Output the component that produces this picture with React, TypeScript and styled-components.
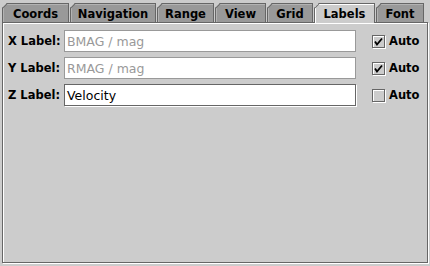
import React from 'react';
import styled, { createGlobalStyle } from 'styled-components';

const GlobalStyle = createGlobalStyle`
  html, body {
    margin: 0;
    padding: 0;
    background: #cccccc;
  }
  body {
    font-family: "DejaVu Sans", "Liberation Sans", sans-serif;
  }
`;

const Window = styled.div`
  width: 430px;
  height: 266px;
  background: #cccccc;
  box-sizing: border-box;
  padding: 3px 2px 3px 2px;
  display: flex;
  flex-direction: column;
`;

const TabStrip = styled.div`
  display: flex;
  height: 19px;
  position: relative;
  z-index: 1;
`;

const Tab = styled.div<{ $width: number; $selected?: boolean }>`
  position: relative;
  width: ${(p) => p.$width}px;
  height: ${(p) => (p.$selected ? 20 : 19)}px;
  box-sizing: border-box;
  margin-right: 1px;
  border: 1px solid #666666;
  border-bottom: none;
  clip-path: polygon(5px 0, 100% 0, 100% 100%, 0 100%, 0 5px);
  background: ${(p) => (p.$selected ? '#cccccc' : '#999999')};
  box-shadow: inset 1px 1px 0 ${(p) => (p.$selected ? '#ffffff' : '#b3b3b3')};
  display: flex;
  align-items: center;
  justify-content: center;
  padding-top: 1px;
  font-weight: bold;
  font-size: 11.5px;
  color: #000000;

  &::before {
    content: '';
    position: absolute;
    left: -1px;
    top: 4px;
    width: 7px;
    height: 1px;
    background: #666666;
    transform: rotate(-45deg);
    transform-origin: 0 0;
  }
`;

const Panel = styled.div`
  flex: 1;
  box-sizing: border-box;
  border: 1px solid #666666;
  box-shadow: inset 1px 1px 0 #ffffff, 1px 1px 0 #ffffff;
  padding: 7px 0 0 5px;
  display: flex;
  flex-direction: column;
  gap: 5px;
`;

const Row = styled.div`
  display: flex;
  align-items: center;
  height: 22px;
`;

const FieldLabel = styled.span`
  width: 56px;
  font-weight: bold;
  font-size: 11.5px;
`;

const TextField = styled.div<{ $disabled?: boolean }>`
  width: 292px;
  height: 22px;
  box-sizing: border-box;
  border: 1px solid ${(p) => (p.$disabled ? '#999999' : '#666666')};
  box-shadow: ${(p) => (p.$disabled ? 'none' : '1px 1px 0 #ffffff')};
  background: #ffffff;
  padding: 0 2px;
  display: flex;
  align-items: center;
  font-size: 12.5px;
  color: ${(p) => (p.$disabled ? '#999999' : '#000000')};
`;

const CheckWrap = styled.label`
  display: flex;
  align-items: center;
  margin-left: 16px;
  gap: 4px;
  font-weight: bold;
  font-size: 11.5px;
`;

const Box = styled.span`
  width: 13px;
  height: 13px;
  box-sizing: border-box;
  border: 1px solid #666666;
  box-shadow: inset 1px 1px 0 #ffffff, 1px 1px 0 #ffffff;
  background: #cccccc;
  display: flex;
  align-items: center;
  justify-content: center;
`;

const Check = () => (
  <svg width="9" height="9" viewBox="0 0 9 9">
    <path d="M1 4.5 L3 7.5 L8 1.5" stroke="#000" strokeWidth="1.8" fill="none" />
  </svg>
);

const tabs = [
  { name: 'Coords', width: 67 },
  { name: 'Navigation', width: 86 },
  { name: 'Range', width: 57 },
  { name: 'View', width: 51 },
  { name: 'Grid', width: 46 },
  { name: 'Labels', width: 61 },
  { name: 'Font', width: 48 },
];

const rows = [
  { label: 'X Label:', value: 'BMAG / mag', auto: true },
  { label: 'Y Label:', value: 'RMAG / mag', auto: true },
  { label: 'Z Label:', value: 'Velocity', auto: false },
];

const App = () => {
  return (
    <Window>
      <GlobalStyle />
      <TabStrip>
        {tabs.map((t) => (
          <Tab key={t.name} $width={t.width} $selected={t.name === 'Labels'}>
            {t.name}
          </Tab>
        ))}
      </TabStrip>
      <Panel>
        {rows.map((r) => (
          <Row key={r.label}>
            <FieldLabel>{r.label}</FieldLabel>
            <TextField $disabled={r.auto}>{r.value}</TextField>
            <CheckWrap>
              <Box>{r.auto && <Check />}</Box>
              Auto
            </CheckWrap>
          </Row>
        ))}
      </Panel>
    </Window>
  );
};

export default App;
